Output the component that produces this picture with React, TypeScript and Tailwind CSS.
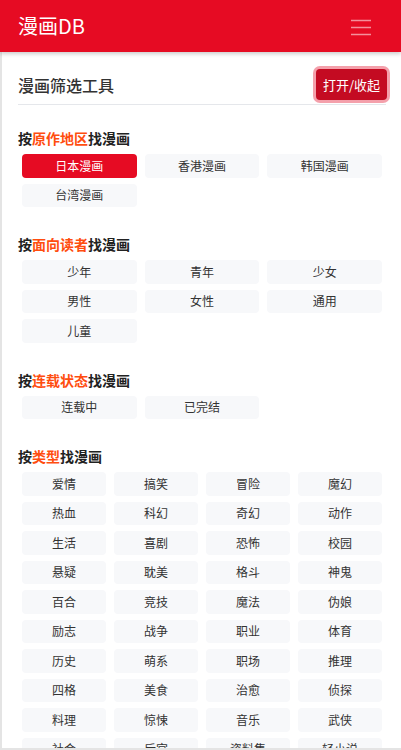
import React from "react";

const font = { fontFamily: '"Noto Sans CJK SC", "Noto Sans", sans-serif' };

type Sec = { pre: string; hl: string; post: string; items: string[]; cols: 3 | 4; active?: string };

const sections: Sec[] = [
  { pre: "按", hl: "原作地区", post: "找漫画", items: ["日本漫画", "香港漫画", "韩国漫画", "台湾漫画"], cols: 3, active: "日本漫画" },
  { pre: "按", hl: "面向读者", post: "找漫画", items: ["少年", "青年", "少女", "男性", "女性", "通用", "儿童"], cols: 3 },
  { pre: "按", hl: "连载状态", post: "找漫画", items: ["连载中", "已完结"], cols: 3 },
  {
    pre: "按",
    hl: "类型",
    post: "找漫画",
    cols: 4,
    items: [
      "爱情", "搞笑", "冒险", "魔幻",
      "热血", "科幻", "奇幻", "动作",
      "生活", "喜剧", "恐怖", "校园",
      "悬疑", "耽美", "格斗", "神鬼",
      "百合", "竞技", "魔法", "伪娘",
      "励志", "战争", "职业", "体育",
      "历史", "萌系", "职场", "推理",
      "四格", "美食", "治愈", "侦探",
      "料理", "惊悚", "音乐", "武侠",
      "社会", "后宫", "资料集", "轻小说",
    ],
  },
];

function Section({ s, first }: { s: Sec; first: boolean }) {
  return (
    <div className={first ? "mt-[23px]" : "mt-[27px]"}>
      <div className="text-[14px] leading-[20px] font-bold text-[#222]">
        {s.pre}
        <span className="text-[#ff4d0f]">{s.hl}</span>
        {s.post}
      </div>
      <div
        className={
          "mt-[6px] px-1 grid gap-x-2 gap-y-[6px] " + (s.cols === 3 ? "grid-cols-3" : "grid-cols-4")
        }
      >
        {s.items.map((it) => (
          <div
            key={it}
            className={
              "h-[23.5px] rounded flex items-center justify-center text-[12px] " +
              (it === s.active ? "bg-[#e60b23] text-white" : "bg-[#f7f8fa] text-[#333]")
            }
          >
            {it}
          </div>
        ))}
      </div>
    </div>
  );
}

export default function App() {
  return (
    <div className="h-[750px] w-[401px] overflow-hidden flex flex-col bg-white" style={font}>
      <header className="relative z-10 h-[52px] shrink-0 bg-[#e60b23] flex items-center justify-between pl-[18px] pr-[30px] shadow-[0_2px_4px_rgba(0,0,0,0.2)]">
        <span className="text-white text-[20px] leading-none">漫画DB</span>
        <svg width="20" height="20" viewBox="0 0 20 20" className="mt-[1px]">
          <path d="M0 3.5h20M0 10.5h20M0 17.5h20" stroke="rgba(255,255,255,0.55)" strokeWidth="1.6" />
        </svg>
      </header>
      <div className="flex-1 overflow-hidden border-l-2 border-b-2 border-[#e4e4e4] pl-4 pr-[15px]">
        <div className="flex items-center justify-between pt-[17px] pb-[4px] border-b border-[#e5e7eb]">
          <span className="text-[16px] font-medium text-[#333]">漫画筛选工具</span>
          <button className="h-[31px] w-[71px] -mr-[1px] rounded bg-[#c40b22] text-white text-[13px] shadow-[0_0_0_3px_rgba(240,120,135,0.7)]">
            打开/收起
          </button>
        </div>
        {sections.map((s, i) => (
          <Section key={s.hl} s={s} first={i === 0} />
        ))}
      </div>
    </div>
  );
}
